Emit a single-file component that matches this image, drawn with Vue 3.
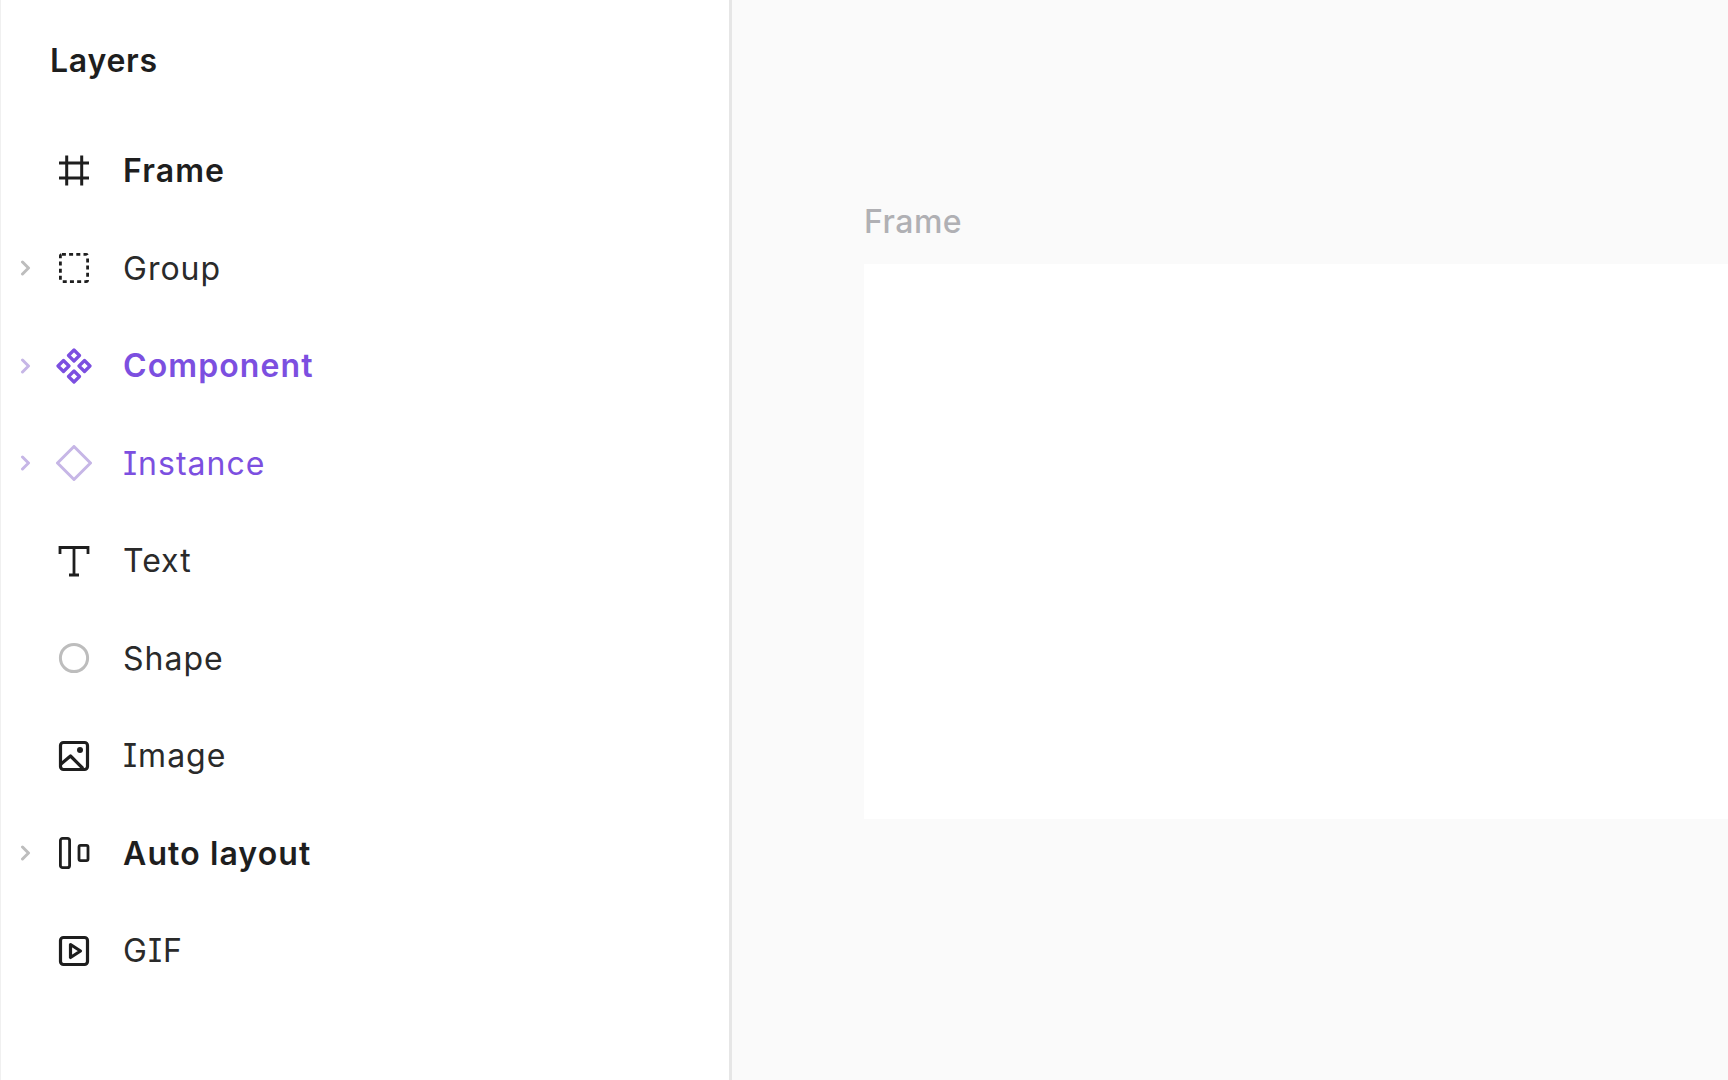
<script setup>
const rows = [
  { name: 'Frame', icon: 'frame', weight: 'bold' },
  { name: 'Group', icon: 'group', chevron: true },
  { name: 'Component', icon: 'component', chevron: true, weight: 'bold', tone: 'purple' },
  { name: 'Instance', icon: 'instance', chevron: true, tone: 'purple' },
  { name: 'Text', icon: 'text' },
  { name: 'Shape', icon: 'shape' },
  { name: 'Image', icon: 'image' },
  { name: 'Auto layout', icon: 'auto', chevron: true, weight: 'bold' },
  { name: 'GIF', icon: 'gif' },
]
</script>

<template>
  <div class="page">
    <aside class="sidebar">
      <h2 class="title">Layers</h2>
      <ul class="list">
        <li v-for="row in rows" :key="row.name" class="row" :class="[row.tone, row.weight]">
          <span class="chev-box">
            <svg v-if="row.chevron" class="chev" width="12" height="16" viewBox="0 0 12 16" fill="none">
              <path d="M2.5 2 L8.5 8 L2.5 14" stroke-width="3" stroke-linejoin="round" stroke-linecap="round" />
            </svg>
          </span>
          <svg class="icon" width="36" height="36" viewBox="0 0 36 36" fill="none">
            <g v-if="row.icon === 'frame'" stroke="#1e1e1e" stroke-width="3">
              <path d="M3 10H33M3 25H33M10.7 2.5V32.5M25.7 2.5V32.5" />
            </g>
            <g v-else-if="row.icon === 'group'" stroke="#1e1e1e" stroke-width="2.8">
              <rect x="4.4" y="4.4" width="27.2" height="27.2" rx="1.5" stroke-dasharray="4 3.2" />
            </g>
            <g v-else-if="row.icon === 'component'" stroke="#7c4fe0" stroke-width="3.2" stroke-linejoin="round">
              <path d="M18 2L23.5 7.5L18 13L12.5 7.5Z" />
              <path d="M28.5 12.5L34 18L28.5 23.5L23 18Z" />
              <path d="M18 23L23.5 28.5L18 34L12.5 28.5Z" />
              <path d="M7.5 12.5L13 18L7.5 23.5L2 18Z" />
            </g>
            <g v-else-if="row.icon === 'instance'" stroke="#c6b6e6" stroke-width="3" stroke-linejoin="round">
              <path d="M18 1.5L34.5 18L18 34.5L1.5 18Z" />
            </g>
            <g v-else-if="row.icon === 'text'" stroke="#1e1e1e" stroke-width="2.8">
              <path d="M4 11V4.5H32V11M18 4.5V32M13 32H23" />
            </g>
            <g v-else-if="row.icon === 'shape'" stroke="#bdbdbd" stroke-width="3">
              <circle cx="18" cy="18" r="13.6" />
            </g>
            <g v-else-if="row.icon === 'image'" stroke="#1e1e1e" stroke-width="3.2">
              <rect x="4.5" y="4.5" width="27" height="27" rx="3" />
              <path d="M5 26L14.5 18L27 30.5" stroke-linejoin="round" />
              <circle cx="24" cy="12" r="3" fill="#1e1e1e" stroke="none" />
            </g>
            <g v-else-if="row.icon === 'auto'" stroke="#1e1e1e" stroke-width="2.8">
              <rect x="4.4" y="3.4" width="9.2" height="29.2" rx="2.2" />
              <rect x="23" y="10.4" width="9" height="15.2" rx="1.6" />
            </g>
            <g v-else-if="row.icon === 'gif'" stroke="#1e1e1e" stroke-width="3.2" stroke-linejoin="round">
              <rect x="4.5" y="4.5" width="27" height="27" rx="3" />
              <path d="M14.5 11.5L24.5 18L14.5 24.5Z" />
            </g>
          </svg>
          <span class="label">{{ row.name }}</span>
        </li>
      </ul>
    </aside>
    <main class="canvas">
      <div class="frame-label">Frame</div>
      <div class="frame"></div>
    </main>
  </div>
</template>

<style>
html, body { margin: 0; background: #fff; overflow: hidden; }
</style>

<style scoped>
.page {
  display: flex;
  width: 1728px;
  height: 1080px;
  font-family: Inter, "Liberation Sans", sans-serif;
  font-feature-settings: "cv08" 1;
  color: #1e1e1e;
}
.sidebar {
  width: 732px;
  height: 1080px;
  box-sizing: border-box;
  flex: none;
  background: #fff;
  border-left: 1px solid #f0f0f0;
  border-right: 3px solid #e6e6e6;
}
.title {
  margin: 0;
  height: 122px;
  box-sizing: border-box;
  padding: 42px 0 0 49px;
  font-size: 32px;
  line-height: 38px;
  font-weight: 600;
  letter-spacing: 0.75px;
  color: #1e1e1e;
}
.list { margin: 0; padding: 0; list-style: none; }
.row {
  height: 97.5px;
  display: flex;
  align-items: center;
  font-size: 32px;
  font-weight: 400;
  letter-spacing: 1px;
  color: #2a2a2a;
}
.chev-box {
  width: 24px;
  margin-left: 13px;
  margin-right: 18px;
  display: flex;
  justify-content: center;
}
.chev { stroke: #bdbdbd; }
.row.purple .chev { stroke: #c6b6e6; }
.icon { flex: none; }
.label { margin-left: 31px; }
.row.bold { font-weight: 600; color: #1e1e1e; letter-spacing: 1.1px; }
.row.purple { color: #7c4fe0; }
.canvas {
  flex: 1;
  background: #fafafa;
  padding: 202px 0 0 132px;
  min-width: 0;
}
.frame-label {
  font-size: 32px;
  line-height: 40px;
  font-weight: 500;
  letter-spacing: 0.5px;
  color: #b0b0b4;
  height: 62px;
}
.frame {
  height: 555px;
  background: #fff;
}
</style>
